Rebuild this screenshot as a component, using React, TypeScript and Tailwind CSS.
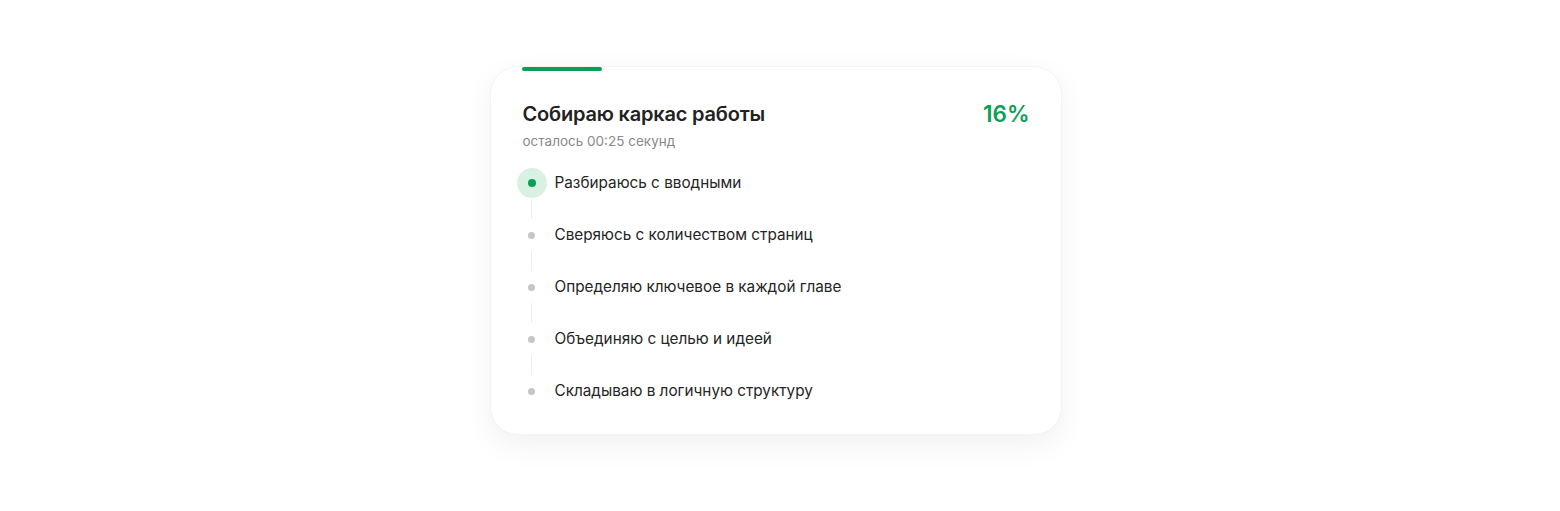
import React from 'react';

const steps = [
  'Разбираюсь с вводными',
  'Сверяюсь с количеством страниц',
  'Определяю ключевое в каждой главе',
  'Объединяю с целью и идеей',
  'Складываю в логичную структуру',
];

export default function App() {
  return (
    <div className="min-h-[511px] w-full bg-white flex justify-center pt-[66px] pr-[9px] font-['Inter',sans-serif]">
      <div className="relative w-[572px] h-[369px] rounded-[28px] bg-white border border-[#f3f3f3] shadow-[0_10px_30px_rgba(0,0,0,0.06)] px-[32px] pt-[33px]">
        <div className="absolute left-[31px] top-0 w-[80px] h-[4px] rounded-full bg-[#0b9f54]" />

        <div className="flex items-start justify-between">
          <div>
            <h1 className="text-[20px] leading-[28px] font-semibold text-[#222222] tracking-[-0.2px]">
              Собираю каркас работы
            </h1>
            <p className="mt-[4px] text-[13.5px] leading-[18px] text-[#8a8a8a]">осталось 00:25 секунд</p>
          </div>
          <div className="text-[22.5px] leading-[28px] font-semibold text-[#0b9f54] mr-[-1px]">16%</div>
        </div>

        <ul className="mt-[17px] flex flex-col">
          {steps.map((s, i) => (
            <li key={s} className="flex flex-col">
              <div className="flex items-center h-[32px]">
                <div className="w-[32px] h-[32px] flex items-center justify-center -ml-[7px] mr-[7px]">
                  {i === 0 ? (
                    <div className="w-[30px] h-[30px] rounded-full bg-[#d8f1e3] flex items-center justify-center">
                      <div className="w-[8px] h-[8px] rounded-full bg-[#0b9f54]" />
                    </div>
                  ) : (
                    <div className="w-[7px] h-[7px] rounded-full bg-[#c3c6cc]" />
                  )}
                </div>
                <span className="text-[15.3px] leading-[20px] text-[#252525]">{s}</span>
              </div>
              {i < steps.length - 1 && (
                <div className="h-[20px] w-[32px] -ml-[7px] flex justify-center">
                  <div className="w-[1.5px] h-full bg-[#eceef0]" />
                </div>
              )}
            </li>
          ))}
        </ul>
      </div>
    </div>
  );
}
